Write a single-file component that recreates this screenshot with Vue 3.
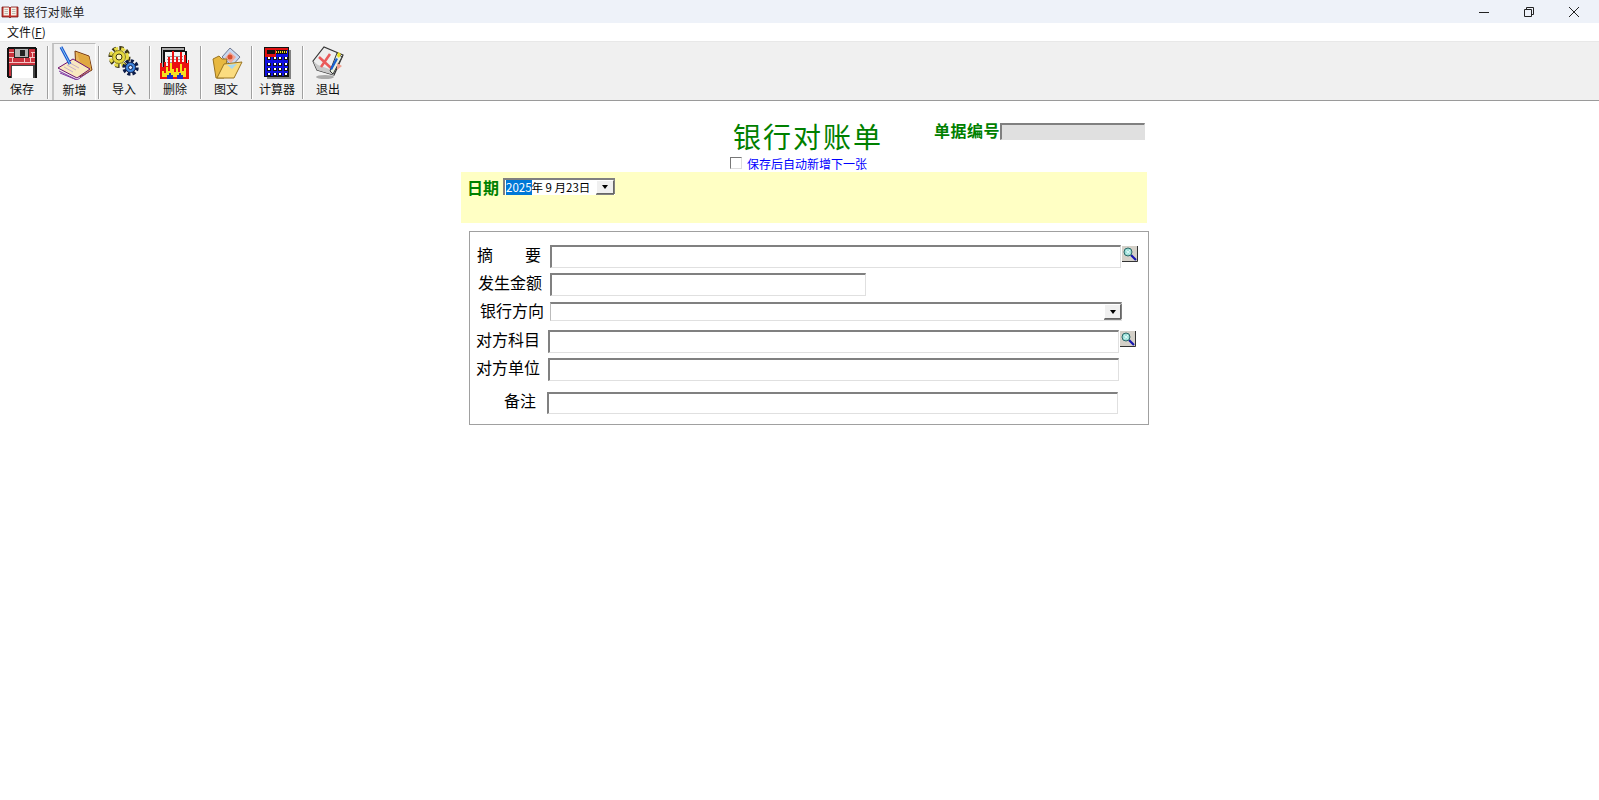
<script setup>
const tools = [
  { id: 'save', label: '保存' },
  { id: 'add', label: '新增', raised: true },
  { id: 'imp', label: '导入' },
  { id: 'del', label: '删除' },
  { id: 'pic', label: '图文' },
  { id: 'calc', label: '计算器' },
  { id: 'exit', label: '退出' }
]
const calcKeys = []
for (const y of [11, 17, 22, 27]) for (const x of [8, 14, 19, 25]) calcKeys.push({ x, y })
</script>

<template>
  <div class="window">
    <header class="titlebar">
      <div class="title-left">
        <svg class="book" width="18" height="14" viewBox="0 0 18 14">
          <path d="M1 2h7l1 1 1-1h7v10h-7l-1 1-1-1H1z" fill="#c8302c" stroke="#7a1a18" stroke-width=".8" />
          <path d="M2.500 2.500h5.500v8H2.500zM10 2.500h5.500v8H10z" fill="#f4f0e8" />
          <path d="M3.500 4.500h3.500M3.500 6.500h3.500M3.500 8.500h3.500M11 4.500h3.500M11 6.500h3.500M11 8.500h3.500" stroke="#b0a8a0" stroke-width=".8" />
        </svg>
        <span>银行对账单</span>
      </div>
      <div class="win-controls">
        <svg width="12" height="12" viewBox="0 0 12 12"><path d="M1 6.500h10" stroke="#222" fill="none" /></svg>
        <svg width="12" height="12" viewBox="0 0 12 12"><path d="M1.500 3.500h7v7h-7zM3.500 3.500v-2h7v7h-2" stroke="#222" fill="none" /></svg>
        <svg width="12" height="12" viewBox="0 0 12 12"><path d="M1 1l10 10M11 1L1 11" stroke="#222" fill="none" /></svg>
      </div>
    </header>

    <nav class="menubar"><span>文件(<u>F</u>)</span></nav>

    <div class="toolbar">
      <template v-for="(t, i) in tools" :key="t.id">
        <button class="tool" :class="{ raised: t.raised }">
          <svg class="tool-icon" width="36" height="34" viewBox="0 0 36 34">
            <g v-if="t.id === 'save'" shape-rendering="crispEdges">
              <path d="M4 1h27l2 2v28l-1 1H4l-1-1V2z" fill="#111" />
              <path d="M5 3h26v27H5z" fill="#c9323d" />
              <path d="M5 6.500h5M5 11.500h26M5 16.500h26M27 6.500h4M8.500 12v4M20.500 12v4M26.500 12v4M12.500 7v4M28.500 7v4" stroke="#f4c4c4" fill="none" />
              <path d="M10 2h15v10H10z" fill="#222" /><path d="M11 3h13v8H11z" fill="#b4b4b4" /><path d="M16 4h5v6h-5z" fill="#222" />
              <path d="M7 19h24v13H7z" fill="#444" /><path d="M8 20h21v12H8z" fill="#fff" />
            </g>
            <g v-else-if="t.id === 'add'">
              <path d="M18 5l14 5 3 14-12 7-4-6z" fill="#e8b860" stroke="#7a3a10" />
              <path d="M20 6.500l12 4.500 2 11-8 3z" fill="#e0a840" />
              <path d="M1 22l15-9 17 10-13 9z" fill="#f8e8c0" stroke="#701070" />
              <path d="M2 25l18 9 13-9M3 27l17 7" fill="none" stroke="#8038a0" />
              <path d="M7 21l9 5M10 19l9 5M13 17l9 5" stroke="#c8b0c8" />
              <path d="M4 1l9 17" stroke="#1c50d0" stroke-width="3" /><path d="M4 1l9 17" stroke="#80d0f0" />
            </g>
            <g v-else-if="t.id === 'imp'">
              <circle cx="13.500" cy="11" r="9" fill="none" stroke="#3a3414" stroke-width="4" stroke-dasharray="4 3" />
              <circle cx="13" cy="11" r="8.500" fill="none" stroke="#e8dc48" stroke-width="3" stroke-dasharray="4 3" />
              <circle cx="13" cy="11" r="6.500" fill="#e4d840" stroke="#8a8020" />
              <circle cx="13" cy="11" r="3" fill="#fff8c0" stroke="#3a3414" />
              <circle cx="24.500" cy="21.500" r="6.500" fill="none" stroke="#0c1c48" stroke-width="3.500" stroke-dasharray="3 2" />
              <circle cx="24.500" cy="21.500" r="5" fill="#4088e0" stroke="#102050" />
              <circle cx="24.500" cy="21.500" r="2" fill="#e0ecff" stroke="#102050" />
            </g>
            <g v-else-if="t.id === 'del'" shape-rendering="crispEdges">
              <path d="M4 1h24v4h2v24H4z" fill="#111" /><path d="M5 2h22v2H5z" fill="#aaa" /><path d="M5 4h1v24H5z" fill="#aaa" />
              <path d="M7 5h22v24H7z" fill="#111" /><path d="M8 6h20v23H8z" fill="#f4f4f4" />
              <path d="M10 10h16M10 13h16M10 16h16" stroke="#999" />
              <path d="M3 33V17h2v4h2v-5h2v4h2v-9h2v6h2V5h2v11h2v-5h2v5h2V6h2v10h2V9h2v8h2v-3h1v19z" fill="#ec1010" />
              <path d="M5 33v-8h2v2h2v-6h2v4h2v-8h2v6h2v3h2v-4h2v4h2v-8h2v7h2v-3h2v11z" fill="#f8e020" />
              <path d="M5 33h26v-2H5z" fill="#ec1010" />
              <path d="M10 33v-4h2v-2h2v2h2v4zM20 33v-4h2v-2h2v2h2v4z" fill="#1c30c0" />
            </g>
            <g v-else-if="t.id === 'pic'">
              <path d="M22 2l10 9-8 9-10-9z" fill="#c8d8f0" stroke="#707890" />
              <path d="M22 6l6 5-5 6-6-5z" fill="#f4a898" /><circle cx="22" cy="11" r="2.500" fill="#d85030" />
              <path d="M5 13l6-3 3 3h5l-3 19H8z" fill="#e8b840" stroke="#9a7420" />
              <path d="M9 32l7-14 18-2-8 16z" fill="#fbdc80" stroke="#9a7420" />
              <path d="M19 19l10-1-5 5z" fill="#a8d8f0" />
            </g>
            <g v-else-if="t.id === 'calc'" shape-rendering="crispEdges">
              <path d="M8 4h24v29H8z" fill="#808080" />
              <path d="M5 1h25v30H5z" fill="#111" />
              <path d="M6 2h23v28H6z" fill="#1010e0" />
              <path d="M6 2h23v2H17v7H6z" fill="#e01010" />
              <path d="M8 4h8v4H8z" fill="#111" />
              <path d="M17 4h11v4H17z" fill="#111" /><path d="M17 5h1v2h-1zM19 5h1v2h-1zM21 5h1v2h-1zM23 5h1v2h-1zM25 5h1v2h-1zM27 5h1v2h-1z" fill="#f0e020" />
              <g v-for="(k, n) in calcKeys" :key="n">
                <rect :x="k.x" :y="k.y" width="4" height="3" fill="#111" />
                <rect :x="k.x + 1" :y="k.y" width="2" height="2" fill="#fff" />
              </g>
            </g>
            <g v-else-if="t.id === 'exit'">
              <ellipse cx="15" cy="31" rx="9" ry="2" fill="#aaa" />
              <path d="M3 15l11-14 19 8-9 20-17-5z" fill="#eee" stroke="#333" stroke-width="1.200" />
              <path d="M3 15l4 9 17 5-2-5-14-5z" fill="#c8c8c8" />
              <path d="M9 11l12 11M20 8L11 21" stroke="#ea5a5a" stroke-width="2.500" />
              <path d="M27 7l5 4-9 17-3-3z" fill="#e8f0e0" stroke="#333" />
              <path d="M26 12l2 1-6 11-2-1z" fill="#1860d0" /><path d="M28 6l3 2-2 4-2-2z" fill="#e8e020" />
              <path d="M27 17l5 3-5 4z" fill="#f0a090" />
            </g>
          </svg>
          <span>{{ t.label }}</span>
        </button>
        <i v-if="i < tools.length - 1" class="sep"></i>
      </template>
    </div>

    <main class="form">
      <div class="head">
        <div class="head-center">
          <h1>银行对账单</h1>
          <label class="auto"><i class="check"></i><span>保存后自动新增下一张</span></label>
        </div>
        <div class="serial">
          <b>单据编号</b>
          <div class="sunken serial-box"></div>
        </div>
      </div>

      <section class="date-band">
        <b>日期</b>
        <div class="date-picker">
          <span class="sel">2025</span><span>年 9 月23日</span>
          <i class="drop"><em></em></i>
        </div>
      </section>

      <section class="panel">
        <div class="row r1">
          <span class="lab spaced"><span>摘</span><span>要</span></span>
          <div class="sunken in full"></div>
          <button class="lookup"><svg width="16" height="16" viewBox="0 0 16 16"><use href="#mag" /></svg></button>
        </div>
        <div class="row r2">
          <span class="lab">发生金额</span>
          <div class="sunken in amount"></div>
        </div>
        <div class="row r3">
          <span class="lab">银行方向</span>
          <div class="sunken combo"><i class="drop"><em></em></i></div>
        </div>
        <div class="row r4">
          <span class="lab">对方科目</span>
          <div class="sunken in full"></div>
          <button class="lookup"><svg width="16" height="16" viewBox="0 0 16 16"><use href="#mag" /></svg></button>
        </div>
        <div class="row r5">
          <span class="lab">对方单位</span>
          <div class="sunken in full"></div>
        </div>
        <div class="row r6">
          <span class="lab note">备注</span>
          <div class="sunken in full"></div>
        </div>
      </section>
    </main>

    <svg width="0" height="0" class="defs">
      <symbol id="mag" viewBox="0 0 16 16">
        <path d="M0 0h16v16H0z" fill="#d4d0c8" />
        <path d="M0 15.500h15.500V0" fill="none" stroke="#333" />
        <path d="M9 9l5 5" stroke="#1818b0" stroke-width="2.200" />
        <circle cx="6" cy="6" r="4" fill="#9ce0d8" stroke="#2c6868" />
        <path d="M4 4.500l4 3M8 4L4.500 8" stroke="#e4fbfb" />
      </symbol>
    </svg>
  </div>
</template>

<style scoped>
.window {
  width: 1599px;
  height: 800px;
  overflow: hidden;
  background: #fff;
  font-family: "Noto Sans CJK SC", "Liberation Sans", sans-serif;
  color: #000;
}
.titlebar {
  height: 23px;
  background: #eef2f9;
  display: flex;
  align-items: center;
  justify-content: space-between;
  font-size: 12px;
  color: #222;
}
.title-left { display: flex; align-items: center; gap: 4px; padding-left: 1px; letter-spacing: .4px; }
.win-controls { display: flex; gap: 33px; padding-right: 19px; }
.win-controls svg { display: block; }
.menubar {
  height: 18px;
  line-height: 18px;
  padding-left: 7px;
  font-size: 12px;
  color: #111;
  background: #fff;
}
.toolbar {
  height: 60px;
  box-sizing: border-box;
  border-top: 1px solid #e8e8e8;
  border-bottom: 1px solid #9a9a9a;
  background: #f0f0f0;
  display: flex;
  align-items: stretch;
  padding: 2px 0 0 0;
}
.tool {
  width: 46px;
  flex: none;
  border: 1px solid transparent;
  background: none;
  padding: 1px 0 0;
  margin: 0;
  display: flex;
  flex-direction: column;
  align-items: center;
  font: inherit;
  font-size: 12px;
  line-height: 15px;
  color: #111;
}
.tool:first-of-type { width: 44px; }
.tool.raised {
  width: 44px;
  border-top: 1px solid #bbb;
  border-left: 2px solid #c4c4c4;
  border-right: 1px solid #fff;
  border-bottom: none;
  margin-top: -1px;
  padding-top: 2px;
}
.tool-icon { display: block; margin-bottom: 1px; height: 34px; flex: none; }
.tool.raised .tool-icon { margin-bottom: 2px; }
.sep {
  width: 1px;
  flex: none;
  margin: 2px 2px 1px 2px;
  background: #a0a0a0;
  box-shadow: 1px 0 0 #fff;
}
.toolbar > .sep:first-of-type { margin: 2px 4px 1px 3px; }

.form {
  width: 700px;
  margin-left: 461px;
}
.head {
  height: 71px;
  display: flex;
  position: relative;
}
.head-center {
  width: 265px;
  margin-left: 268px;
  padding-top: 19px;
}
.head-center h1 {
  margin: 0;
  font-size: 28px;
  line-height: 32px;
  font-weight: 400;
  letter-spacing: 2px;
  color: #008000;
  margin-left: 4px;
  white-space: nowrap;
}
.auto {
  display: flex;
  align-items: center;
  gap: 5px;
  height: 14px;
  margin-top: 4px;
  margin-left: 1px;
  font-size: 12px;
  color: #0000ff;
  white-space: nowrap;
}
.check {
  width: 12px;
  height: 12px;
  box-sizing: border-box;
  border: 1px solid;
  border-color: #777 #ddd #ddd #777;
  background: #fff;
}
.serial {
  display: flex;
  align-items: flex-start;
  padding-top: 20px;
  margin-left: -60px;
}
.serial b { font-size: 16px; line-height: 20px; letter-spacing: .5px; margin-top: -1px; color: #008000; font-weight: 700; white-space: nowrap; }
.sunken {
  box-sizing: border-box;
  border-style: solid;
  border-width: 2px 1px 1px 2px;
  border-color: #808080 #e0e0e0 #e0e0e0 #808080;
  background: #fff;
}
.serial-box { width: 145px; height: 17px; background: #e0e0e0; margin-top: 2px; }

.date-band {
  width: 686px;
  height: 51px;
  background: #ffffc4;
  display: flex;
  align-items: flex-start;
  padding: 5px 0 0 6px;
  box-sizing: border-box;
  gap: 4px;
}
.date-band b { font-size: 16px; line-height: 20px; color: #008000; font-weight: 700; }
.date-picker {
  width: 112px;
  height: 17px;
  margin-top: 1px;
  box-sizing: border-box;
  background: #fff;
  border-style: solid;
  border-width: 2px 0 0 2px;
  border-color: #808080;
  font-size: 11.500px;
  line-height: 14px;
  display: flex;
  padding-left: 1px;
  position: relative;
  white-space: nowrap;
}
.sel { background: #0078d7; color: #fff; }
.drop {
  position: absolute;
  right: 0;
  top: 0;
  width: 18px;
  height: 14px;
  box-sizing: border-box;
  background: #f0f0f0;
  border: 1px solid;
  border-color: #fff #666 #666 #fff;
  box-shadow: 0 1px 0 #808080, 1px 0 0 #808080;
  display: flex;
  align-items: center;
  justify-content: center;
}
.date-picker .drop { right: 1px; }
.drop em {
  width: 0;
  height: 0;
  border: 3px solid transparent;
  border-top: 4px solid #000;
  border-bottom: 0;
}

.panel {
  width: 680px;
  height: 194px;
  margin: 8px 0 0 8px;
  box-sizing: border-box;
  border: 1px solid #a0a0a0;
  padding-top: 13px;
}
.row {
  display: flex;
  align-items: center;
  font-size: 16px;
  color: #000;
  padding-left: 7px;
}
.lab {
  width: 64px;
  white-space: nowrap;
  flex: none;
  line-height: 18px;
  margin-bottom: 5px;
}
.spaced { display: flex; justify-content: space-between; }
.in { height: 23px; }
.full { width: 571px; }
.amount { width: 316px; }
.combo {
  width: 572px;
  height: 19px;
  position: relative;
  border-width: 2px 1px 1px 1px;
  border-color: #808080 #e0e0e0 #e0e0e0 #bbb;
}
.combo .drop { top: 0; right: 0; height: 15px; width: 17px; box-shadow: 0 1px 0 #808080, 1px 0 0 #808080; }
.lookup {
  width: 16px;
  height: 16px;
  padding: 0;
  border: 0;
  margin: -5px 0 0 1px;
  background: none;
}
.lookup svg { display: block; }
.row .lab { margin-right: 9px; }
.r2 { margin-top: 5px; padding-left: 8px; }
.r2 .lab { margin-right: 8px; }
.r3 { margin-top: 6px; padding-left: 10px; height: 19px; }
.r3 .lab { margin-right: 6px; margin-bottom: 3px; }
.r4 { margin-top: 9px; padding-left: 6px; }
.r4 .lab { margin-right: 8px; }
.r5 { margin-top: 5px; padding-left: 6px; }
.r5 .lab { margin-right: 8px; }
.r6 { margin-top: 10px; padding-left: 6px; }
.r6 .lab { margin-right: 7px; }
.r6 .in { height: 22px; }
.note { text-align: right; padding-right: 4px; box-sizing: content-box; width: 60px; }
.defs { position: absolute; }
</style>
